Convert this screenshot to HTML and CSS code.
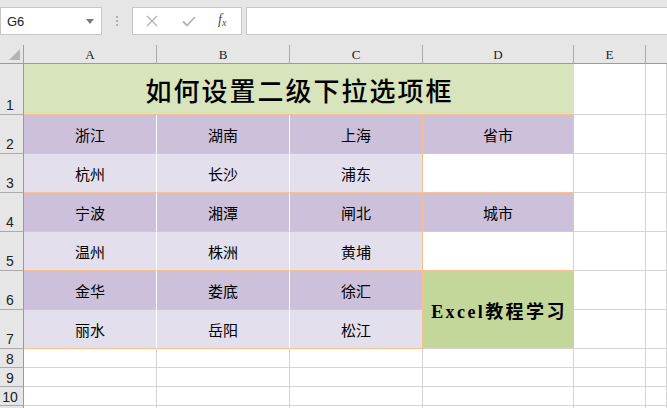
FILE: index.html
```html
<!DOCTYPE html>
<html>
<head>
<meta charset="utf-8">
<link rel="stylesheet" href="styles.css">
</head>
<body>
<div class="toolbar">
  <div class="namebox">
    <span class="name">G6</span>
    <svg class="dd" width="8" height="5" viewBox="0 0 8 5"><path d="M0 0h8L4 5z" fill="#7a7a7a"/></svg>
  </div>
  <div class="dots"><i></i><i></i><i></i></div>
  <div class="fbtns">
    <svg width="12" height="12" viewBox="0 0 12 12"><path d="M1 1L11 11M11 1L1 11" stroke="#b4b4b4" stroke-width="1.4"/></svg>
    <svg width="14" height="12" viewBox="0 0 14 12"><path d="M1 6.5L5 10.5L13 2" stroke="#b4b4b4" stroke-width="1.8" fill="none"/></svg>
    <span class="fx">f<sub>x</sub></span>
  </div>
  <div class="fbar"></div>
</div>
<div class="sheet">
  <div class="corner"><span class="tri"></span></div>
  <div class="ch">A</div><div class="ch">B</div><div class="ch">C</div><div class="ch">D</div><div class="ch">E</div><div class="ch last"></div>

  <div class="rh">1</div>
  <div class="c title">如何设置二级下拉选项框</div>
  <div class="c"></div><div class="c"></div>

  <div class="rh">2</div>
  <div class="c dk w">浙江</div><div class="c dk w">湖南</div><div class="c dk o">上海</div><div class="c dk o">省市</div>
  <div class="c"></div><div class="c"></div>

  <div class="rh">3</div>
  <div class="c lt w">杭州</div><div class="c lt w">长沙</div><div class="c lt o">浦东</div><div class="c ob"></div>
  <div class="c"></div><div class="c"></div>

  <div class="rh">4</div>
  <div class="c dk w">宁波</div><div class="c dk w">湘潭</div><div class="c dk o">闸北</div><div class="c dk o">城市</div>
  <div class="c"></div><div class="c"></div>

  <div class="rh">5</div>
  <div class="c lt w">温州</div><div class="c lt w">株洲</div><div class="c lt o">黄埔</div><div class="c ob"></div>
  <div class="c"></div><div class="c"></div>

  <div class="rh">6</div>
  <div class="c dk w">金华</div><div class="c dk w">娄底</div><div class="c dk o">徐汇</div><div class="c green">Excel教程学习</div>
  <div class="c"></div><div class="c"></div>

  <div class="rh">7</div>
  <div class="c lt w">丽水</div><div class="c lt w">岳阳</div><div class="c lt o">松江</div>
  <div class="c"></div><div class="c"></div>

  <div class="rh small">8</div>
  <div class="c"></div><div class="c"></div><div class="c"></div><div class="c"></div><div class="c"></div><div class="c"></div>
  <div class="rh small">9</div>
  <div class="c"></div><div class="c"></div><div class="c"></div><div class="c"></div><div class="c"></div><div class="c"></div>
  <div class="rh small">10</div>
  <div class="c"></div><div class="c"></div><div class="c"></div><div class="c"></div><div class="c"></div><div class="c"></div>
  <div class="rh small"></div>
  <div class="c"></div><div class="c"></div><div class="c"></div><div class="c"></div><div class="c"></div><div class="c"></div>
</div>
</body>
</html>
```
FILE: styles.css
```css
* { box-sizing: border-box; }
html, body { margin: 0; padding: 0; }
body {
  width: 667px; height: 408px; overflow: hidden;
  background: #fff;
  font-family: "Noto Sans CJK SC", "Liberation Sans", sans-serif;
}
.toolbar {
  height: 45px;
  background: #e6e6e6;
  display: flex;
  align-items: flex-start;
  padding-top: 7px;
}
.namebox {
  width: 102px; height: 28px;
  background: #fff;
  border: 1px solid #c6c6c6;
  display: flex; align-items: center; justify-content: space-between;
  padding: 0 7px 0 6px;
}
.name { font-family: "Liberation Sans", sans-serif; font-size: 13px; color: #222; }
.dd { margin-top: 1px; }
.dots {
  width: 30px; height: 28px;
  display: flex; flex-direction: column; align-items: center; justify-content: center; gap: 2px;
}
.dots i { display: block; width: 2px; height: 2px; background: #b0b0b0; }
.fbtns {
  width: 110px; height: 28px;
  background: #fff;
  border: 1px solid #c6c6c6;
  display: flex; align-items: center;
  padding-left: 13px; gap: 24px;
}
.fx {
  font-family: "Liberation Serif", serif; font-style: italic;
  font-size: 14px; color: #4a4a4a; margin-left: -2px; margin-top: -3px;
}
.fx sub { font-size: 10px; vertical-align: -2px; }
.fbar {
  margin-left: 4px;
  flex: 1; height: 28px;
  background: #fff;
  border: 1px solid #c6c6c6;
  border-right: none;
}
.sheet {
  display: grid;
  grid-template-columns: 24px 133px 133px 133px 151px 72px 1fr;
  grid-template-rows: 19px 51px 39px 39px 39px 39px 39px 39px 19px 19px 19px 19px;
}
.corner {
  background: #e6e6e6;
  border-right: 1px solid #a0a0a0;
  border-bottom: 1px solid #9b9b9b;
  position: relative;
}
.tri {
  position: absolute; right: 3px; bottom: 3px;
  width: 0; height: 0;
  border-left: 11px solid transparent;
  border-bottom: 11px solid #b4b4b4;
}
.ch {
  background: #e6e6e6;
  border-right: 1px solid #ababab;
  border-bottom: 1px solid #9b9b9b;
  font-family: "Liberation Serif", serif;
  font-size: 13px; color: #222;
  display: flex; align-items: center; justify-content: center;
  padding-top: 2px;
}
.ch.last { border-right: none; }
.rh {
  background: #e6e6e6;
  border-right: 1px solid #9b9b9b;
  border-bottom: 1px solid #ababab;
  font-family: "Liberation Sans", sans-serif;
  font-size: 14px; color: #222;
  display: flex; align-items: flex-end; justify-content: center;
  padding-right: 3px; padding-bottom: 1px;
  line-height: 16px;
}
.rh.small { padding-bottom: 0; }
.c {
  border-right: 1px solid #d4d4d4;
  border-bottom: 1px solid #d4d4d4;
  display: flex; align-items: center; justify-content: center;
  font-size: 15px; color: #000;
}
.title {
  grid-column: span 4;
  background: #d8e4bc;
  border-right-color: #d8e4bc;
  border-bottom-color: #fabf8f;
  font-size: 26px;
  font-weight: 500;
  letter-spacing: 2px;
  padding-left: 2px;
}
.dk { background: #ccc0da; border-bottom-color: #fabf8f; }
.lt { background: #e4dfec; border-bottom-color: #fabf8f; }
.w { border-right-color: #ffffff; }
.o { border-right-color: #fabf8f; }
.ob { border-bottom-color: #fabf8f; }
.green {
  grid-row: span 2;
  background: #c4d79b;
  border-right-color: #c4d79b;
  font-family: "Liberation Serif", "Noto Sans CJK SC", serif;
  font-weight: bold;
  font-size: 18px;
  letter-spacing: 2.4px;
  padding-left: 2px;
}
```
